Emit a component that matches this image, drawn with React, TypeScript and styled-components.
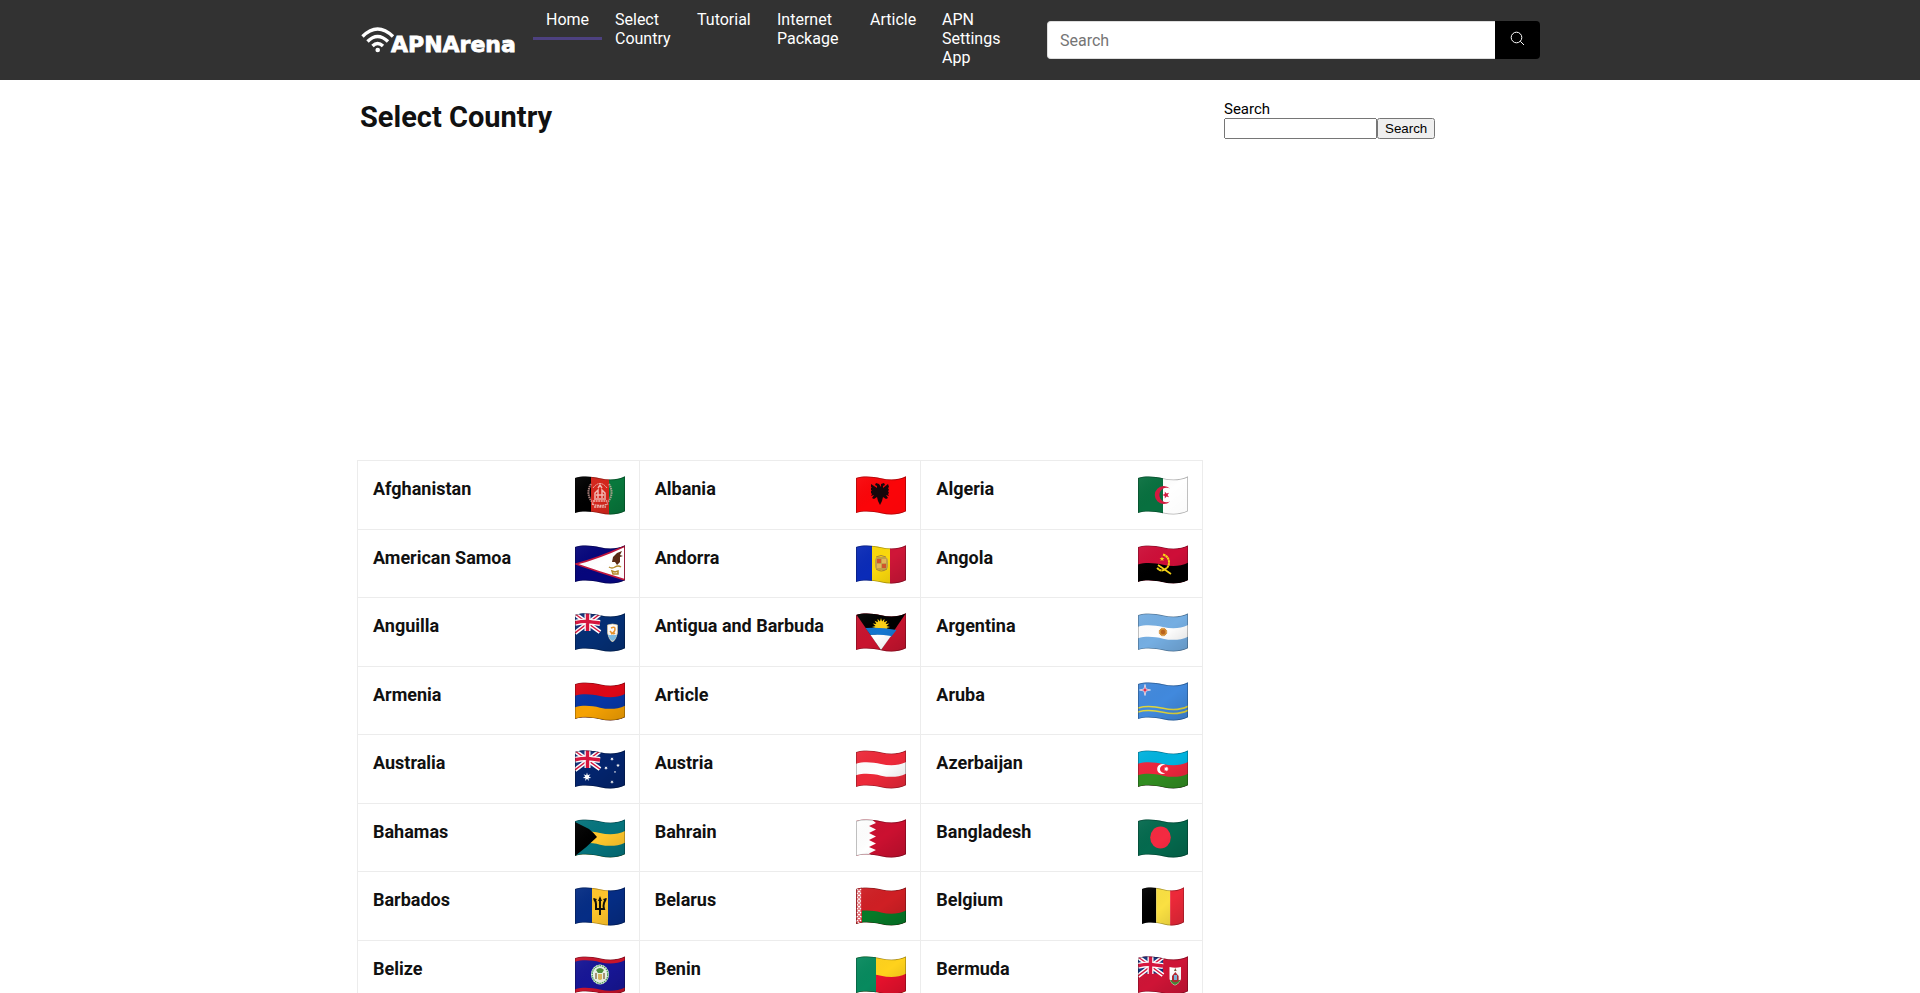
import React, { useId } from "react";
import styled, { createGlobalStyle } from "styled-components";

const GlobalStyle = createGlobalStyle`
  *, *::before, *::after { box-sizing: border-box; }
  html { scrollbar-width: none; }
  body { margin: 0; background: #fff; color: #111; font-family: Roboto, "Liberation Sans", sans-serif; font-size: 16px; }
`;

/* ---------- header ---------- */

const Header = styled.header`
  background: #323232;
`;

const HeaderInner = styled.div`
  display: flex;
  align-items: flex-start;
  max-width: 1200px;
  min-height: 80px;
  margin: 0 auto;
  padding-right: 20px;
`;

const Logo = styled.a`
  display: flex;
  width: 173px;
  flex: none;
  padding-top: 26px;
`;

const Nav = styled.nav`
  flex: none;
  margin-right: 33px;
`;

const NavList = styled.ul`
  display: grid;
  grid-template-columns: 69px 82px 80px 93px 72px 85px;
  align-items: start;
  list-style: none;
  margin: 0;
  padding: 0;
`;

const NavLink = styled.a<{ $active?: boolean }>`
  display: block;
  padding: 10px 13px 8px;
  border-bottom: 3px solid ${(p) => (p.$active ? "#4d4180" : "transparent")};
  color: #fff;
  line-height: 19px;
  text-decoration: none;
`;

const HeaderSearch = styled.form`
  display: flex;
  flex: 1;
  height: 38px;
  margin-top: 21px;
`;

const HeaderInput = styled.input`
  flex: 1;
  min-width: 0;
  padding: 0 12px;
  border: 1px solid #ddd;
  border-right: 0;
  border-radius: 4px 0 0 4px;
  background: #fff;
  font: 16px Roboto, "Liberation Sans", sans-serif;
  &::placeholder { color: #757575; }
`;

const HeaderSubmit = styled.button`
  width: 45px;
  padding: 0 0 1px;
  border: 0;
  border-radius: 0 4px 4px 0;
  background: #000;
  color: #fff;
`;

/* ---------- page ---------- */

const Page = styled.div`
  display: grid;
  grid-template-columns: minmax(0, 846px) minmax(0, 1fr);
  column-gap: 21px;
  max-width: 1206px;
  margin: 0 auto;
`;

const Title = styled.h1`
  margin: 0;
  padding: 20px 3px 0;
  font-size: 29px;
  line-height: 34px;
`;

const AdSpace = styled.div`
  height: 326px;
`;

const CountryGrid = styled.ul`
  display: grid;
  grid-template-columns: repeat(3, 1fr);
  grid-auto-rows: 69px 68px;
  list-style: none;
  margin: 0;
  padding: 0;
  border-right: 1px solid #ececec;
  border-bottom: 1px solid #ececec;
`;

const CountryCell = styled.li`
  border-top: 1px solid #ececec;
  border-left: 1px solid #ececec;
`;

const CountryLink = styled.a`
  display: flex;
  justify-content: space-between;
  padding: 15px 14px 0 15px;
  color: #111;
  text-decoration: none;
`;

const CountryName = styled.span`
  padding-top: 3px;
  font-size: 18px;
  font-weight: 700;
  line-height: 20px;
`;

const FlagArt = styled.svg<{ $narrow?: boolean }>`
  display: block;
  flex: none;
  width: ${(p) => (p.$narrow ? 42 : 50)}px;
  height: 39px;
  margin: 0 ${(p) => (p.$narrow ? 4 : 0)}px;
`;

const Sidebar = styled.aside`
  padding-top: 20px;
`;

const SideLabel = styled.label`
  display: block;
  color: #000;
  font-size: 15px;
  line-height: 18px;
`;

const SideForm = styled.div`
  display: flex;
  height: 21px;
`;

const SideInput = styled.input`
  width: 153px;
`;

const SideButton = styled.button`
  padding: 1px 6px;
`;

/* ---------- flags ---------- */

const H = 35;
const wave = (y: number) =>
  `M0 ${y}C8 ${y - 2.5} 17 ${y - 1.5} 25 ${y + 0.3}S42 ${y + 2.3} 50 ${y - 1.7}`;
const band = (from: number, to: number) => {
  const b = 2 + H * to;
  return `${wave(2 + H * from)}L50 ${b - 1.7}C42 ${b + 2.3} 33 ${b + 2.1} 25 ${b + 0.3}S8 ${b - 2.5} 0 ${b}z`;
};

const Rows = ({ c }: { c: string[] }) => (
  <>
    {c.map((fill, i) => (
      <path key={i} d={band(i / c.length, 1)} fill={fill} />
    ))}
  </>
);

const Cols = ({ c, at = [17, 33] }: { c: string[]; at?: number[] }) => (
  <>
    {c.map((fill, i) => {
      const x = i === 0 ? 0 : at[i - 1];
      const end = i < at.length ? at[i] : 50;
      return <rect key={i} x={x} y="-2" width={end - x} height="44" fill={fill} />;
    })}
  </>
);

const Field = ({ c }: { c: string }) => <rect y="-2" width="50" height="44" fill={c} />;

const star = (cx: number, cy: number, r: number, n = 5, inner = 0.42) =>
  Array.from({ length: n * 2 }, (_, i) => {
    const a = (Math.PI * i) / n - Math.PI / 2;
    const k = i % 2 ? r * inner : r;
    return `${(cx + k * Math.cos(a)).toFixed(2)},${(cy + k * Math.sin(a)).toFixed(2)}`;
  }).join(" ");

const UnionJack = () => (
  <g>
    <path d="M0 0H25V19Q18 17 12 17T0 20z" fill="#12307c" />
    <path d="M0 1L25 19M25 1L0 20" stroke="#fff" strokeWidth="4.4" />
    <path d="M0 1L25 19M25 1L0 20" stroke="#d8123c" strokeWidth="1.4" />
    <path d="M12.5 -1V18M0 9.8Q8 8 12.5 8.500T25 10" fill="none" stroke="#fff" strokeWidth="6" />
    <path d="M12.500 -1V18M0 9.800Q8 8 12.500 8.500T25 10" fill="none" stroke="#d8123c" strokeWidth="3.4" />
  </g>
);

const flags: Record<string, React.ReactNode> = {
  Afghanistan: (
    <>
      <Cols c={["#000", "#d5261c", "#08783c"]} at={[16, 34]} />
      <g fill="none" stroke="#f3b8b0">
        <path d="M16 8q-6 10 2 19M34 8q6 10 -2 19" strokeWidth="2" strokeDasharray="1.500 .7" opacity=".7" />
        <path d="M18 12q7 -9 14 0" strokeWidth="1" strokeDasharray="2 .5" />
        <path d="M17 28q8 3 16 0M19 31h12M18 25h14" strokeWidth="1.400" strokeDasharray="2 .6" />
        <path d="M20 22v-5l3 -3v8M30 22v-5l-3 -3v8M23 12l2 -3 2 3M21 19h8M19 23h12" strokeWidth="1.500" />
      </g>
    </>
  ),
  Albania: (
    <>
      <Field c="#fb0509" />
      <path
        d="M25 11l-2 -3 -3 -1 -1 2 2 1 0 2 -6 -4v3l1 1h-1v2l1 1h-1v2l1 1 -1 2 3 -1 -2 3 2 1 3 -2 1 4 2 4 2 -4 1 -4 3 2 2 -1 -2 -3 3 1 -1 -2 1 -1 -1 -2 1 -1 -1 -2 1 -1 -1 -3 -5 4v-2l2 -1 -1 -2 -3 1z"
        fill="#16060a"
      />
    </>
  ),
  Algeria: (
    <>
      <Cols c={["#08703f", "#fff"]} at={[25]} />
      <path d="M32 12.500a9 9 0 1 0 0 13a7.300 7.300 0 1 1 0 -13z" fill="#d31a40" />
      <polygon points={star(28, 19, 3.8)} fill="#d31a40" transform="rotate(-18 28 19)" />
    </>
  ),
  "American Samoa": (
    <>
      <Field c="#06067c" />
      <path d="M1 19Q24 13 50 1V35Q24 27 1 19z" fill="#fff" stroke="#c1153d" strokeWidth="1.800" />
      <path d="M37 17l1 -5 4 -4 5 -2 -2 4 3 1 -3 1 0 5 -3 3 -2 -3z" fill="#5a2a14" />
      <path d="M34 22q3 2 6 0t6 0M37 26l3 1 3 -1v3h-5z" fill="none" stroke="#b48a28" strokeWidth="1.500" />
    </>
  ),
  Andorra: (
    <>
      <Cols c={["#0a2bb8", "#fbd90c", "#cf1638"]} at={[16, 34]} />
      <rect x="19" y="12" width="13" height="13" rx="4" fill="#c2a04a" />
      <path d="M21 14h4v4h-4zM26 19h4v4h-4z" fill="#d2552c" />
      <path d="M26 14h4v4h-4zM21 19h4v4h-4z" fill="#e2b65a" />
      <path d="M20 12q5 -3 10 0M20 24q5 4 11 0" fill="none" stroke="#a5823c" strokeWidth="1" />
    </>
  ),
  Angola: (
    <>
      <Rows c={["#ce0e38", "#000"]} />
      <g fill="none" stroke="#f9d616">
        <path d="M25 9.500q6 2 6 8t-7 8q-3 0 -5 -3" strokeWidth="2" strokeDasharray="2.500 .3" />
        <path d="M20 20q6 4 13 9" strokeWidth="1.700" />
      </g>
      <polygon points={star(24, 14, 2.6)} fill="#f9d616" />
    </>
  ),
  Anguilla: (
    <>
      <Field c="#042f74" />
      <UnionJack />
      <path d="M32.500 12Q37.500 10 42.500 12V20Q41 27 37.500 29Q34 27 32.500 20z" fill="#fff" stroke="#d8c79c" strokeWidth=".7" />
      <path d="M33 22h9q-1 4 -4.500 6q-3.500 -2 -4.500 -6z" fill="#80c3ee" />
      <path d="M36 15q4 -2 4 1t-4 5M35 18q3 4 5 2" fill="none" stroke="#ee982f" strokeWidth="1.500" />
    </>
  ),
  "Antigua and Barbuda": (
    <>
      <Field c="#c9142f" />
      <path d="M0 -2H50V0L25 37L0 1z" fill="#000" />
      <polygon points={star(25, 14, 9, 16, 0.62)} fill="#fcd116" />
      <path d="M9.500 15Q25 14 40.500 17L35 24Q24 21 14.500 22z" fill="#1476cf" />
      <path d="M14.500 22Q24 21 35 23L25 37z" fill="#fff" />
    </>
  ),
  Argentina: (
    <>
      <Rows c={["#75aee2", "#fff", "#75aee2"]} />
      <polygon points={star(25, 19, 4.7, 16, 0.75)} fill="#d58e35" />
      <circle cx="25" cy="19" r="2.200" fill="#ba641e" />
    </>
  ),
  Armenia: <Rows c={["#dc0716", "#0636a5", "#f6a203"]} />,
  Aruba: (
    <>
      <Field c="#4189dd" />
      <g fill="none" stroke="#e1d63c" strokeWidth="1.600">
        <path d={wave(26)} />
        <path d={wave(30)} />
      </g>
      <polygon points={star(7, 8, 5.5, 4, 0.26)} fill="#e02c4f" stroke="#fff" strokeWidth=".7" />
    </>
  ),
  Australia: (
    <>
      <Field c="#03246d" />
      <UnionJack />
      <g fill="#fff">
        <polygon points={star(12, 27, 4.4, 7)} />
        <polygon points={star(37, 9, 1.9, 7)} />
        <polygon points={star(31, 18, 1.9, 7)} />
        <polygon points={star(43, 15.5, 1.9, 7)} />
        <polygon points={star(37, 32, 1.9, 7)} />
        <polygon points={star(40, 22, 1.2)} />
      </g>
    </>
  ),
  Austria: <Rows c={["#ed2939", "#fff", "#ed2939"]} />,
  Azerbaijan: (
    <>
      <Rows c={["#00b2de", "#ed263d", "#318d21"]} />
      <path d="M27.500 15.300a5 5 0 1 0 0 7.400a4 4 0 1 1 0 -7.400z" fill="#fff" />
      <polygon points={star(28.3, 19, 2.6, 8, 0.5)} fill="#fff" />
    </>
  ),
  Bahamas: (
    <>
      <Rows c={["#05747d", "#ffc72c", "#05747d"]} />
      <path d="M0 3L14 10Q19 14 22 18Q12 28 0 37z" fill="#000" />
    </>
  ),
  Bahrain: (
    <>
      <Field c="#cb1030" />
      <path d="M0 -2H13L20 4L13 7L20 10.500L13 14L20 17.500L13 21L20 24.500L13 28L20 31L13 34.500L20 39H0z" fill="#fff" />
    </>
  ),
  Bangladesh: (
    <>
      <Field c="#046a4e" />
      <ellipse cx="22.500" cy="18.500" rx="10.300" ry="11" fill="#f42a41" />
    </>
  ),
  Barbados: (
    <>
      <Cols c={["#052d85", "#ffc52b", "#052d85"]} />
      <path
        d="M25 11v17M19 12q2 2 2 5t0 5h8q-1 -3 0 -6t2 -4"
        fill="none"
        stroke="#14110a"
        strokeWidth="2"
      />
      <path d="M25 9l2 5h-4zM18 11l4 1 -2 3zM32 11l-4 1 2 3z" fill="#14110a" />
    </>
  ),
  Belarus: (
    <>
      <path d={band(0, 1)} fill="#cf1f24" />
      <path d={band(0.66, 1)} fill="#067a28" />
      <rect y="-2" width="6" height="42" fill="#d52b34" />
      <path d="M1 2l4 4 -4 4 4 4 -4 4 4 4 -4 4 4 4 -4 4 4 4M5 2l-4 4 4 4 -4 4 4 4 -4 4 4 4 -4 4 4 4" fill="none" stroke="#fff" strokeWidth="1.300" strokeDasharray="2 .9" />
    </>
  ),
  Belgium: <Cols c={["#000", "#fae042", "#ed2939"]} at={[17, 33.500]} />,
  Belize: (
    <>
      <path d={band(0, 1)} fill="#c9142b" />
      <path d={band(0.11, 0.89)} fill="#171696" />
      <ellipse cx="25" cy="18.500" rx="9" ry="10" fill="#e9f2e6" />
      <ellipse cx="25" cy="18.500" rx="7.800" ry="8.800" fill="none" stroke="#3f9a52" strokeWidth="1.200" strokeDasharray="1.600 .8" />
      <path d="M21 14q4 -4 8 0l-2 3h-4z" fill="#4f8f3c" />
      <path d="M23 18h4v5q-2 2 -4 0z" fill="#d9b65d" />
      <path d="M21 17v6M29 17v6" stroke="#7b5433" strokeWidth="1.200" />
    </>
  ),
  Benin: (
    <>
      <Rows c={["#ffd21c", "#e8112d"]} />
      <rect y="-2" width="20" height="42" fill="#078a5e" />
    </>
  ),
  Bermuda: (
    <>
      <Field c="#ce1436" />
      <UnionJack />
      <path d="M31.500 11Q37 12.500 43 11V23Q41 28 37 29.500Q33 28 31.500 23z" fill="#fff" />
      <path d="M32 24h10.500q-2 4 -5.500 5q-3.500 -1 -5 -5z" fill="#4b8f3a" />
      <path d="M34 25v-5l3.300 -4 3.300 4v5q-3.300 2.500 -6.600 0z" fill="#b52b36" />
      <path d="M36 19h3v5h-3z" fill="#7fb9df" />
      <path d="M36 15l1.300 -3 1.300 3z" fill="#7a5a3a" />
    </>
  ),
};

const Flag = ({ name }: { name: string }) => {
  const id = useId();
  const light = name === "Algeria" || name === "Albania" || name === "American Samoa";
  return (
    <FlagArt
      $narrow={name === "Belgium"}
      viewBox="0 0 50 39"
      preserveAspectRatio="none"
      role="img"
      aria-label={`Flag of ${name}`}
    >
      <defs>
        <clipPath id={`${id}c`}>
          <path d={band(0, 1)} />
        </clipPath>
        <linearGradient id={`${id}g`} x1="0" y1="0" x2="1" y2="1">
          <stop offset="0" stopColor="#fff" stopOpacity=".06" />
          <stop offset=".5" stopColor="#000" stopOpacity="0" />
          <stop offset="1" stopColor="#000" stopOpacity={light ? 0.02 : 0.14} />
        </linearGradient>
      </defs>
      <g clipPath={`url(#${id}c)`}>
        {flags[name]}
        <path d={band(0, 1)} fill={`url(#${id}g)`} stroke="#000" strokeOpacity=".3" strokeWidth="1.600" />
      </g>
    </FlagArt>
  );
};

const countries = [
  "Afghanistan", "Albania", "Algeria",
  "American Samoa", "Andorra", "Angola",
  "Anguilla", "Antigua and Barbuda", "Argentina",
  "Armenia", "Article", "Aruba",
  "Australia", "Austria", "Azerbaijan",
  "Bahamas", "Bahrain", "Bangladesh",
  "Barbados", "Belarus", "Belgium",
  "Belize", "Benin", "Bermuda",
];

const navItems = ["Home", "Select Country", "Tutorial", "Internet Package", "Article", "APN Settings App"];

const LogoArt = () => (
  <svg width="158" height="30" viewBox="0 0 158 30" role="img" aria-label="APNArena">
    <g fill="none" stroke="#fff" strokeWidth="3.400">
      <path d="M2.500 10.500Q17.500 -4.500 33 10.500" />
      <path d="M7.500 15.500Q17.500 5.500 28 15.500" />
      <path d="M12.500 20Q17.500 15 23 20" />
    </g>
    <circle cx="17.700" cy="24" r="2.300" fill="#fff" />
    <text
      x="31"
      y="25.500"
      fill="#fff"
      stroke="#fff"
      strokeWidth=".8"
      fontFamily="'DejaVu Sans', sans-serif"
      fontWeight="700"
      fontSize="22"
    >
      APNArena
    </text>
  </svg>
);

export default function App() {
  return (
    <>
      <GlobalStyle />
      <Header>
        <HeaderInner>
          <Logo href="#">
            <LogoArt />
          </Logo>
          <Nav>
            <NavList>
              {navItems.map((item, i) => (
                <li key={item}>
                  <NavLink href="#" $active={i === 0}>
                    {item}
                  </NavLink>
                </li>
              ))}
            </NavList>
          </Nav>
          <HeaderSearch onSubmit={(e) => e.preventDefault()}>
            <HeaderInput type="text" placeholder="Search" aria-label="Search the site" />
            <HeaderSubmit type="submit" aria-label="Submit search">
              <svg width="15" height="15" viewBox="0 0 15 15" fill="none" stroke="#fff">
                <circle cx="6.500" cy="6.500" r="5.300" />
                <path d="M10.300 10.300L14 14" />
              </svg>
            </HeaderSubmit>
          </HeaderSearch>
        </HeaderInner>
      </Header>
      <Page>
        <main>
          <Title>Select Country</Title>
          <AdSpace />
          <CountryGrid>
            {countries.map((name) => (
              <CountryCell key={name}>
                <CountryLink href="#">
                  <CountryName>{name}</CountryName>
                  {flags[name] && <Flag name={name} />}
                </CountryLink>
              </CountryCell>
            ))}
          </CountryGrid>
        </main>
        <Sidebar>
          <SideLabel htmlFor="side-search">Search</SideLabel>
          <SideForm>
            <SideInput id="side-search" type="search" />
            <SideButton type="button">Search</SideButton>
          </SideForm>
        </Sidebar>
      </Page>
    </>
  );
}
